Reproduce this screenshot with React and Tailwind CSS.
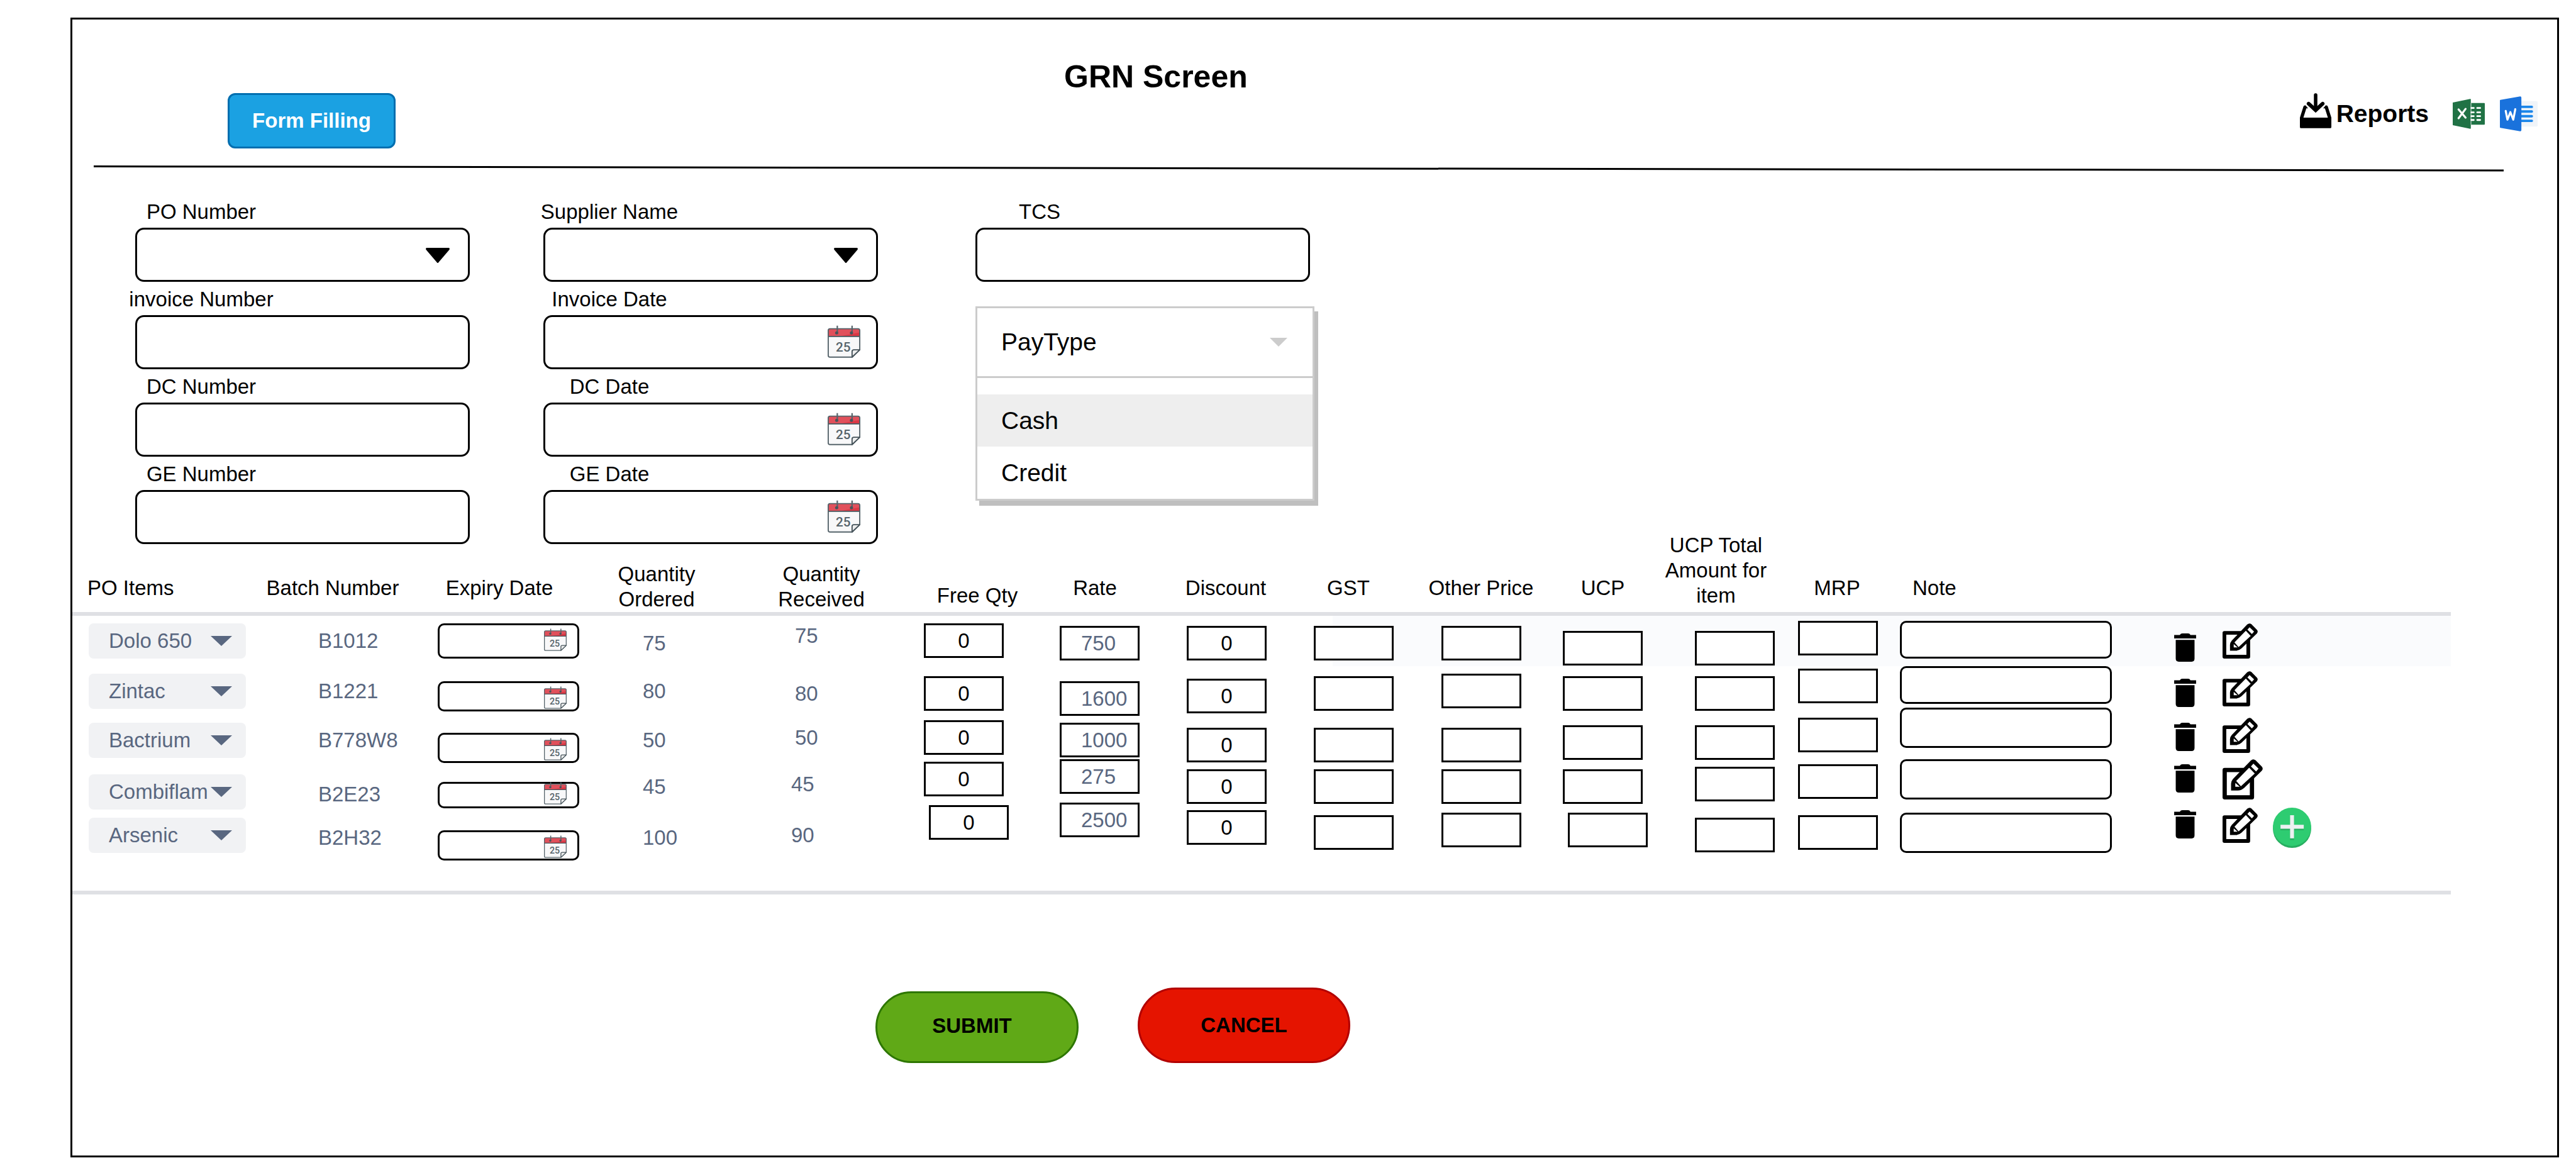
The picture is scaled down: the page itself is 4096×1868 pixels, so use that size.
import React from "react";

const PT = {
  0: "pt-0",
  4: "pt-1",
  8: "pt-2",
  12: "pt-3",
  16: "pt-4",
  20: "pt-5",
  24: "pt-6",
  28: "pt-7",
  32: "pt-8",
  36: "pt-9",
  40: "pt-10",
  44: "pt-11",
};

function CalendarIcon({ className }) {
  return (
    <svg viewBox="0 0 166 164" className={className} aria-hidden="true">
      <path d="M12 17H154Q163 17 163 26V124L124 161H12Q3 161 3 152V26Q3 17 12 17Z" fill="#f8f8f9" />
      <path d="M3 56V26Q3 17 12 17H154Q163 17 163 26V56Z" fill="#db3845" />
      <path d="M3 56V26Q3 17 12 17H154Q163 17 163 26V36L60 56Z" fill="#e4606a" opacity="0.6" />
      <path d="M3 56H163" stroke="#47545b" strokeWidth="6" />
      <path
        d="M12 17H154Q163 17 163 26V124L124 161H12Q3 161 3 152V26Q3 17 12 17Z"
        fill="none"
        stroke="#56646b"
        strokeWidth="6"
        strokeLinejoin="round"
      />
      <path d="M124 161V133Q124 124 133 124H163Z" fill="#eceded" stroke="#47545b" strokeWidth="6" strokeLinejoin="round" />
      <path d="M49 1V36M124 1V36" stroke="#56646b" strokeWidth="7" />
      <circle cx="46" cy="38" r="8" fill="#47545b" />
      <circle cx="121" cy="38" r="8" fill="#47545b" />
      <text x="79" y="133" textAnchor="middle" fontSize="66" fontFamily="Roboto, sans-serif" fontWeight="500" fill="#56646b">
        25
      </text>
    </svg>
  );
}

function TrashIcon() {
  return (
    <svg viewBox="0 0 113 146" className="h-[45px] w-[35px]" aria-hidden="true">
      <path d="M0 8H29Q34 0 42 0H72Q80 0 84 8H113V26H0Z" />
      <path d="M8 33H105V130Q105 146 90 146H24Q8 146 8 130Z" />
    </svg>
  );
}

function EditIcon({ className }) {
  return (
    <svg viewBox="0 0 180 180" className={className} aria-hidden="true">
      <rect x="9.5" y="48.5" width="122" height="122" fill="#fff" stroke="#000" strokeWidth="19" strokeLinejoin="round" />
      <path d="M38 140V110Q38 98 47 88L126 6Q137 -4 148 5L175 32Q184 42 175 52L97 128Q84 140 68 140Z" />
      <path d="M61 97L119 38L144 64L82 121Z" fill="#fff" />
      <path d="M127 32L138 20L161 42L150 55Z" fill="#fff" />
      <path d="M57 106L77 123H57Z" fill="#fff" />
    </svg>
  );
}

function PlusIcon() {
  return (
    <svg viewBox="0 0 196 206" className="h-16 w-[61px]" aria-hidden="true">
      <circle cx="98" cy="108" r="98" fill="#27ae60" />
      <circle cx="98" cy="98" r="98" fill="#2ecc71" />
      <path d="M88 47H108V96H158V116H108V166H88V116H39V96H88Z" fill="#27ae60" />
      <path d="M88 39H108V88H158V108H108V157H88V108H39V88H88Z" fill="#ecf0f1" />
    </svg>
  );
}

function DownloadIcon() {
  return (
    <svg viewBox="0 0 54 60" className="h-14 w-[50px] self-start" aria-hidden="true">
      <path d="M0 42L6 23Q7 20 10 21L14 26H11L6 42H48L43 26H40L44 21Q47 20 48 23L54 42V58Q54 60 52 60H2Q0 60 0 58Z" />
      <path d="M27 3V25" fill="none" stroke="#000" strokeWidth="6" strokeLinecap="round" />
      <path d="M15 18L27 29L39 18" fill="none" stroke="#000" strokeWidth="6.5" strokeLinecap="round" />
    </svg>
  );
}

function ExcelIcon() {
  return (
    <svg viewBox="0 0 55 51" className="h-12 w-[51px]" aria-hidden="true">
      <path d="M31 7H54Q55 7 55 8V43Q55 44 54 44H31Z" fill="#207245" />
      <path d="M0 6L30 0Q31 0 31 1V50Q31 51 30 51L0 45Z" fill="#207245" />
      <path d="M31.4 7V44" stroke="#fff" strokeWidth="0.8" />
      <path
        d="M32 15.5H36M42 15.5H47M32 23H36M42 23H47M32 29.500H36M42 29.500H47M32 36H36M42 36H47"
        stroke="#fff"
        strokeWidth="3"
        strokeLinecap="round"
      />
      <path d="M10 18L22 32M22 17L10 33" stroke="#fff" strokeWidth="3.5" strokeLinecap="round" />
    </svg>
  );
}

function WordIcon() {
  return (
    <svg viewBox="0 0 65 60" className="h-14 w-[60px]" aria-hidden="true">
      <path d="M36 8H63Q65 8 65 10V50Q65 52 63 52H36Z" fill="#f0f4f9" />
      <path d="M36 18H55M36 26H55M36 34H55M36 42H55" stroke="#1b86ea" strokeWidth="4.200" strokeLinecap="round" />
      <path d="M1 6L35 0Q37 0 37 2V58Q37 60 35 60L1 54Q0 54 0 53V7Q0 6 1 6Z" fill="#1a72dc" />
      <path d="M10 25L13 40L18 27L23 40L26.500 22" fill="none" stroke="#fff" strokeWidth="3.5" strokeLinecap="round" strokeLinejoin="round" />
    </svg>
  );
}

const fieldBox = "h-[86px] w-full rounded-[14px] border-3 border-black bg-white px-6";

function Field({ id, label, kind, labelClass = "-ml-3 w-[234px]" }) {
  return (
    <div className="w-[532px] max-w-full">
      <label htmlFor={id} className={`mb-[7px] block leading-[37px] text-center whitespace-nowrap ${labelClass}`}>
        {label}
      </label>
      <div className="relative">
        {kind === "select" ? (
          <>
            <select id={id} className={`${fieldBox} block appearance-none`} defaultValue="">
              <option value=""></option>
            </select>
            <svg viewBox="0 0 38 24" className="pointer-events-none absolute top-8 right-8 h-6 w-[38px]" aria-hidden="true">
              <path d="M1 0H37Q38.500 1 37.500 3L20 23.500Q19 24.500 18 23.500L0.500 3Q-0.500 1 1 0Z" />
            </svg>
          </>
        ) : (
          <input id={id} type="text" className={`${fieldBox} block`} />
        )}
        {kind === "date" && <CalendarIcon className="pointer-events-none absolute top-4 right-7 h-[52px] w-[52px]" />}
      </div>
    </div>
  );
}

function PayType() {
  return (
    <div className="mt-[39px] w-[539px] border-3 border-[#cccccc] bg-white text-[39px] shadow-[6px_8px_0_#bfbfbf]">
      <button type="button" aria-haspopup="listbox" className="flex h-[111px] w-full items-center justify-between border-b-3 border-[#cccccc] pr-10 pl-[38px]">
        PayType
        <svg viewBox="0 0 28 14" className="h-3.5 w-7" aria-hidden="true">
          <path d="M0 0H28L14 14Z" fill="#cccccc" />
        </svg>
      </button>
      <ul role="listbox" aria-label="PayType" className="pt-[26px]">
        <li role="option" aria-selected="true" className="flex h-[83px] items-center bg-[#eeeeee] pl-[38px]">
          Cash
        </li>
        <li role="option" aria-selected="false" className="flex h-[83px] items-center pl-[38px]">
          Credit
        </li>
      </ul>
    </div>
  );
}

const columns = [
  { name: "PO Items", width: "w-[292px]", head: "pl-6 pb-[18px] text-left" },
  { name: "Batch Number", width: "w-[244px]", head: "pb-[18px]" },
  { name: "Expiry Date", width: "w-[286px]", head: "pb-[18px]" },
  { name: "Quantity Ordered", width: "w-[214px]", head: "px-8" },
  { name: "Quantity Received", width: "w-[310px]", head: "px-20" },
  { name: "Free Qty", width: "w-[186px]", head: "pb-1.5" },
  { name: "Rate", width: "w-[188px]", head: "pb-[18px]" },
  { name: "Discount", width: "w-[228px]", head: "pb-[18px]" },
  { name: "GST", width: "w-[162px]", head: "pb-[18px]" },
  { name: "Other Price", width: "w-[260px]", head: "pb-[18px]" },
  { name: "UCP", width: "w-[127px]", head: "pb-[18px]" },
  { name: "UCP Total Amount for item", width: "w-[233px]", head: "px-4 pb-1.5" },
  { name: "MRP", width: "w-[152px]", head: "pb-[18px]" },
  { name: "Note", width: "w-[403px]", head: "pl-11 pb-[18px] text-left" },
];

/* `drop` holds the distance of each cell's content from the top of its row, in column order. */
const rows = [
  {
    item: "Dolo 650", batch: "B1012", ordered: 75, received: 75, rate: 750,
    height: "h-20", dateBox: "h-14", calendar: "top-2", noteBox: "h-15",
    receivedPad: "pl-[113px]", freePad: "pl-2", ucpPad: "pl-0", edit: "h-14 w-14",
    drop: [12, 20, 12, 24, 12, 12, 16, 16, 16, 16, 24, 24, 8, 8, 28, 12],
  },
  {
    item: "Zintac", batch: "B1221", ordered: 80, received: 80, rate: 1600,
    height: "h-[66px]", dateBox: "h-12", calendar: "top-2", noteBox: "h-15",
    receivedPad: "pl-[113px]", freePad: "pl-2", ucpPad: "pl-0", edit: "h-14 w-14",
    drop: [12, 20, 24, 20, 24, 16, 24, 20, 16, 12, 16, 16, 4, 0, 20, 8],
  },
  {
    item: "Bactrium", batch: "B778W8", ordered: 50, received: 50, rate: 1000,
    height: "h-[82px]", dateBox: "h-12", calendar: "top-2", noteBox: "h-16",
    receivedPad: "pl-[113px]", freePad: "pl-2", ucpPad: "pl-0", edit: "h-14 w-14",
    drop: [24, 32, 40, 32, 28, 20, 24, 32, 32, 32, 28, 28, 16, 0, 24, 16],
  },
  {
    item: "Combiflam", batch: "B2E23", ordered: 45, received: 45, rate: 275,
    height: "h-[69px]", dateBox: "h-[42px]", calendar: "top-0", noteBox: "h-16",
    receivedPad: "pl-[107px]", freePad: "pl-2", ucpPad: "pl-0", edit: "h-16 w-16",
    drop: [24, 36, 36, 24, 20, 4, 0, 16, 16, 16, 16, 12, 8, 0, 8, 0],
  },
  {
    item: "Arsenic", batch: "B2H32", ordered: 100, received: 90, rate: 2500,
    height: "h-[140px]", dateBox: "h-12", calendar: "top-2", noteBox: "h-16",
    receivedPad: "pl-[107px]", freePad: "pl-4", ucpPad: "pl-2", edit: "h-14 w-14", last: true,
    drop: [24, 36, 44, 36, 32, 4, 0, 12, 20, 16, 16, 24, 20, 16, 12, 8],
  },
];

function Row({ row, first }) {
  const td = `p-0 align-top ${row.last ? "border-b-6 border-[#dfe0e4]" : ""}`;
  const cell = (i, pad = "") => `flex items-start ${row.height} ${PT[row.drop[i]]} ${pad}`;
  const box = "block h-[55px] w-[127px] shrink-0 border-3 border-black bg-white";
  const empty = [
    ["GST", 8, "pl-[26px]"],
    ["Other price", 9, "pl-[67px]"],
    ["UCP", 10, row.ucpPad],
    ["UCP total amount", 11, "pl-[83px]"],
    ["MRP", 12, "pl-[14px]"],
  ];
  return (
    <tr className={first ? "bg-[linear-gradient(to_right,transparent_53%,#fafbfd_53%)]" : ""}>
      <td className={td}>
        <div className={cell(0, "pl-[26px]")}>
          <div className="relative w-[250px]">
            <select
              aria-label="PO item"
              defaultValue={row.item}
              className="block h-14 w-full appearance-none rounded-lg bg-[#f1f2f4] pl-8 text-[#596780]"
            >
              <option>{row.item}</option>
            </select>
            <svg viewBox="0 0 34 16" className="pointer-events-none absolute top-5 right-[22px] h-4 w-[34px]" aria-hidden="true">
              <path d="M0 0H34L17 16Z" fill="#596780" />
            </svg>
          </div>
        </div>
      </td>
      <td className={td}>
        <div className={cell(1, "pl-[99px] text-[#596780]")}>{row.batch}</div>
      </td>
      <td className={td}>
        <div className={cell(2, "pl-[45px]")}>
          <div className="relative w-[225px]">
            <input
              type="text"
              aria-label={`Expiry date of ${row.item}`}
              className={`block w-full rounded-[10px] border-3 border-black bg-white ${row.dateBox}`}
            />
            <CalendarIcon className={`pointer-events-none absolute right-5 h-9 w-9 ${row.calendar}`} />
          </div>
        </div>
      </td>
      <td className={td}>
        <div className={cell(3, "pl-[85px] text-[#596780]")}>{row.ordered}</div>
      </td>
      <td className={td}>
        <div className={cell(4, `text-[#596780] ${row.receivedPad}`)}>{row.received}</div>
      </td>
      <td className={td}>
        <div className={cell(5, row.freePad)}>
          <input type="text" aria-label={`Free quantity of ${row.item}`} defaultValue="0" className={`${box} text-center`} />
        </div>
      </td>
      <td className={td}>
        <div className={cell(6, "pl-[38px]")}>
          <input type="text" aria-label={`Rate of ${row.item}`} defaultValue={row.rate} className={`${box} pl-[31px] text-[#596780]`} />
        </div>
      </td>
      <td className={td}>
        <div className={cell(7, "pl-[52px]")}>
          <input type="text" aria-label={`Discount on ${row.item}`} defaultValue="0" className={`${box} text-center`} />
        </div>
      </td>
      {empty.map(([name, i, pad]) => (
        <td key={name} className={td}>
          <div className={cell(i, pad)}>
            <input type="text" aria-label={`${name} of ${row.item}`} className={box} />
          </div>
        </td>
      ))}
      <td className={td}>
        <div className={cell(13, "pl-6")}>
          <input
            type="text"
            aria-label={`Note on ${row.item}`}
            className={`block w-[337px] shrink-0 rounded-[10px] border-3 border-black bg-white ${row.noteBox}`}
          />
        </div>
      </td>
      <td className={td}>
        <div className={cell(14, "pl-[57px]")}>
          <button type="button" aria-label={`Delete ${row.item}`}>
            <TrashIcon />
          </button>
        </div>
      </td>
      <td className={td}>
        <div className={cell(15, "gap-6 pl-[14px]")}>
          <button type="button" aria-label={`Edit ${row.item}`}>
            <EditIcon className={row.edit} />
          </button>
          {row.last && (
            <button type="button" aria-label="Add item">
              <PlusIcon />
            </button>
          )}
        </div>
      </td>
    </tr>
  );
}

export default function App() {
  return (
    <div className="flex min-h-screen bg-white pt-7 pr-[27px] pb-7 pl-28 font-['Liberation_Sans',Arial,sans-serif] text-[33px] leading-10 text-black">
      <main className="min-w-0 flex-1 border-3 border-black">
        <header className="grid grid-cols-[1577fr_2374fr] pt-[63px]">
          <div className="pl-[247px]">
            <button
              type="button"
              className="mt-[54px] h-[88px] w-[267px] rounded-xl border-3 border-[#006eaf] bg-[#1ba1e2] font-bold text-white"
            >
              Form Filling
            </button>
          </div>
          <div className="flex items-start justify-between pr-[31px]">
            <h1 className="text-[50px] leading-14 font-bold">GRN Screen</h1>
            <div className="mt-[54px] flex h-[66px] items-center">
              <DownloadIcon />
              <span className="ml-2 text-[39px] font-bold">Reports</span>
              <button type="button" aria-label="Export to Excel" className="ml-[38px]">
                <ExcelIcon />
              </button>
              <button type="button" aria-label="Export to Word" className="ml-6">
                <WordIcon />
              </button>
            </div>
          </div>
        </header>
        <div className="mt-[26px] mr-[85px] ml-[34px]">
          <svg viewBox="0 0 3832 12" preserveAspectRatio="none" className="block h-3 w-full" aria-hidden="true">
            <path d="M0 2.500L3832 9" stroke="#000" strokeWidth="3" />
          </svg>
        </div>

        <form className="mt-11 grid grid-cols-[649fr_687fr_2515fr] pl-[100px]">
          <div className="flex flex-col gap-[9px]">
            <Field id="po-number" label="PO Number" kind="select" />
            <Field id="invoice-number" label="invoice Number" />
            <Field id="dc-number" label="DC Number" />
            <Field id="ge-number" label="GE Number" />
          </div>
          <div className="flex flex-col gap-[9px]">
            <Field id="supplier-name" label="Supplier Name" kind="select" />
            <Field id="invoice-date" label="Invoice Date" kind="date" />
            <Field id="dc-date" label="DC Date" kind="date" />
            <Field id="ge-date" label="GE Date" kind="date" />
          </div>
          <div>
            <Field id="tcs" label="TCS" labelClass="w-51" />
            <PayType />
          </div>
        </form>

        <div className="-mt-[18px] mr-[169px]">
          <table className="w-full table-fixed border-separate border-spacing-0">
            <colgroup>
              {columns.map((c) => (
                <col key={c.name} className={c.width} />
              ))}
              <col className="w-[120px]" />
              <col className="w-[377px]" />
            </colgroup>
            <thead>
              <tr>
                {columns.map((c) => (
                  <th key={c.name} scope="col" className={`border-b-6 border-[#dfe0e4] align-bottom font-normal ${c.head}`}>
                    {c.name}
                  </th>
                ))}
                <td className="border-b-6 border-[#dfe0e4]" />
                <td className="border-b-6 border-[#dfe0e4]" />
              </tr>
            </thead>
            <tbody>
              {rows.map((row, i) => (
                <Row key={row.item} row={row} first={i === 0} />
              ))}
            </tbody>
          </table>
        </div>

        <div className="mt-[148px] grid grid-cols-[1277fr_2674fr]">
          <div className="col-start-2 flex items-end gap-[94px] font-bold">
            <button type="submit" className="h-[114px] w-[323px] rounded-full border-3 border-[#2d7600] bg-[#60a917] pr-4 pb-1">
              SUBMIT
            </button>
            <button type="button" className="h-[120px] w-[338px] rounded-full border-3 border-[#b20000] bg-[#e51400]">
              CANCEL
            </button>
          </div>
        </div>
      </main>
    </div>
  );
}
